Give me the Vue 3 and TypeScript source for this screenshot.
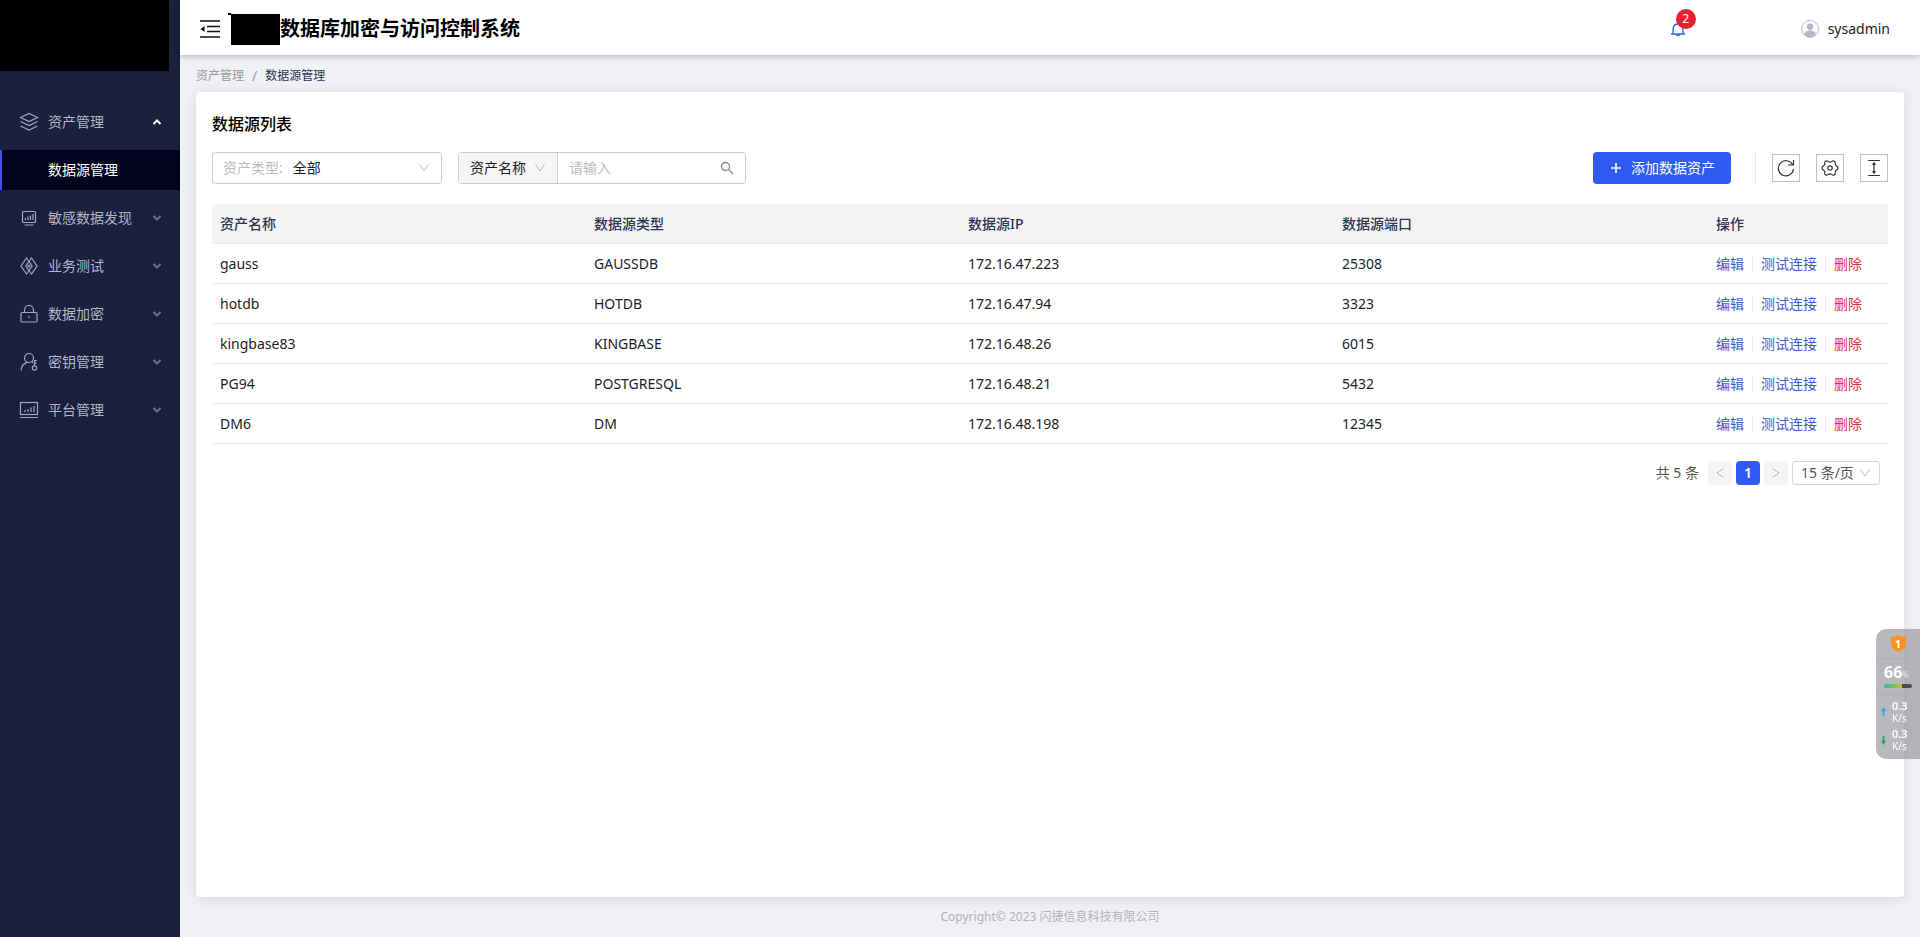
<script setup lang="ts">
import { ref } from 'vue'

interface MenuItem {
  title: string
  icon: string
  open?: boolean
  children?: string[]
}

interface Source {
  name: string
  type: string
  ip: string
  port: string
}

const menu: MenuItem[] = [
  { title: '资产管理', icon: 'layers', open: true, children: ['数据源管理'] },
  { title: '敏感数据发现', icon: 'monitor' },
  { title: '业务测试', icon: 'diamond' },
  { title: '数据加密', icon: 'lock' },
  { title: '密钥管理', icon: 'key' },
  { title: '平台管理', icon: 'chart' },
]

const columns = ['资产名称', '数据源类型', '数据源IP', '数据源端口', '操作']

const sources: Source[] = [
  { name: 'gauss', type: 'GAUSSDB', ip: '172.16.47.223', port: '25308' },
  { name: 'hotdb', type: 'HOTDB', ip: '172.16.47.94', port: '3323' },
  { name: 'kingbase83', type: 'KINGBASE', ip: '172.16.48.26', port: '6015' },
  { name: 'PG94', type: 'POSTGRESQL', ip: '172.16.48.21', port: '5432' },
  { name: 'DM6', type: 'DM', ip: '172.16.48.198', port: '12345' },
]

const keyword = ref('')
</script>

<template>
  <div class="layout">
    <aside class="sidebar">
      <div class="logo"></div>
      <nav class="menu">
        <template v-for="item in menu" :key="item.title">
          <button type="button" class="menu-item">
            <svg class="menu-icon" viewBox="0 0 20 20" aria-hidden="true">
              <template v-if="item.icon === 'layers'">
                <path d="M10 1.500 18.500 5.500 10 9.500 1.500 5.500z" />
                <path d="M1.500 9.500 10 13.500 18.500 9.500M1.500 14 10 18 18.500 14" />
              </template>
              <template v-else-if="item.icon === 'monitor'">
                <rect x="3.500" y="3.500" width="13" height="11" rx="1" />
                <path d="M5.500 17h9M6.500 10v2M9 8.500v3.500M11.500 7.500v4.500M14 6v6" />
              </template>
              <template v-else-if="item.icon === 'diamond'">
                <path d="M10 5.500 7.500 2 2 10l5.500 8 2.500-3.500M10 5.500 12.500 2 18 10l-5.500 8-2.500-3.500" />
                <path d="M10 5.500 6.800 10l3.200 4.500 3.200-4.500z" />
                <circle cx="10" cy="10" r="1" />
              </template>
              <template v-else-if="item.icon === 'lock'">
                <rect x="2" y="8.500" width="16" height="9.500" rx="1" />
                <path d="M5.500 8.500V6a4.500 4.500 0 0 1 9 0v2.500M10 12v2" />
              </template>
              <template v-else-if="item.icon === 'key'">
                <circle cx="10" cy="6" r="4.500" />
                <path d="M2 18.500c.5-5 3-7.500 6.500-8.200M12.500 9.500l1.500 1.300" />
                <circle cx="15.500" cy="16" r="2.200" />
                <path d="M15.500 13.800V8.500h2.500M15.500 11.200h2" />
              </template>
              <template v-else>
                <rect x="1.500" y="2.500" width="17" height="12" />
                <path d="M1 17.500h18M6 10v2M9 9v3M12 7.500v4.500M15 6v6" />
              </template>
            </svg>
            <span>{{ item.title }}</span>
            <svg class="arrow" :class="{ open: item.open }" viewBox="0 0 10 10" aria-hidden="true">
              <path d="M1.500 3 5 6.500 8.500 3" />
            </svg>
          </button>
          <a v-for="child in item.children" :key="child" href="#" class="submenu-item">{{ child }}</a>
        </template>
      </nav>
    </aside>

    <div class="main">
      <header class="header">
        <button type="button" class="fold" aria-label="收起菜单">
          <svg viewBox="0 0 20 20" aria-hidden="true">
            <path d="M0 2h20M7 7.500h13M7 12.500h13M0 18h20" fill="none" stroke="#111" stroke-width="1.500" />
            <path d="M4.500 7v6L.5 10z" fill="#111" />
          </svg>
        </button>
        <div class="brand"></div>
        <h1>数据库加密与访问控制系统</h1>
        <button type="button" class="bell" aria-label="通知">
          <svg viewBox="0 0 16 16" aria-hidden="true">
            <path d="M1 13h14M2.500 13c.7-1 .7-2 .7-5 0-3 2-5 4.800-5s4.800 2 4.800 5c0 3 0 4 .7 5M6.200 13.500c.2 1.500 3.400 1.500 3.600 0" />
          </svg>
          <span class="badge">2</span>
        </button>
        <button type="button" class="user">
          <svg viewBox="0 0 18 18" aria-hidden="true">
            <circle cx="9" cy="9" r="8.500" fill="#fff" stroke="#b9bccd" />
            <circle cx="9" cy="6.800" r="3.200" fill="#b5b8ca" />
            <path d="M3 14.500c1-3 3-4 6-4s5 1 6 4a8 8 0 0 1-12 0z" fill="#b5b8ca" />
          </svg>
          <span>sysadmin</span>
        </button>
      </header>

      <nav class="breadcrumb" aria-label="面包屑">
        <a href="#">资产管理</a>
        <span class="slash">/</span>
        <span class="current">数据源管理</span>
      </nav>

      <main class="card">
        <h2>数据源列表</h2>
        <div class="toolbar">
          <div class="box type-box">
            <label for="asset-type">资产类型:</label>
            <select id="asset-type"><option>全部</option></select>
            <svg class="chevron" viewBox="0 0 12 12" aria-hidden="true"><path d="M1.500 2.500 6 9l4.500-6.500" /></svg>
          </div>
          <div class="box search-box">
            <div class="addon">
              <select aria-label="搜索字段"><option>资产名称</option></select>
              <svg class="chevron" viewBox="0 0 12 12" aria-hidden="true"><path d="M1.500 2.500 6 9l4.500-6.500" /></svg>
            </div>
            <input v-model="keyword" type="text" placeholder="请输入" aria-label="搜索关键字" />
            <button type="button" class="search" aria-label="搜索">
              <svg viewBox="0 0 14 14" aria-hidden="true"><circle cx="5.500" cy="5.500" r="4" /><path d="m8.500 8.500 4.500 4.500" /></svg>
            </button>
          </div>
          <button type="button" class="add">
            <svg viewBox="0 0 12 12" aria-hidden="true"><path d="M6 1v10M1 6h10" /></svg>
            <span>添加数据资产</span>
          </button>
          <span class="separator"></span>
          <div class="tools">
            <button type="button" aria-label="刷新">
              <svg viewBox="0 0 18 18" aria-hidden="true"><path d="M15.500 5.500A7.600 7.600 0 1 0 16.500 10M16.500 1v5h-5.500" /></svg>
            </button>
            <button type="button" aria-label="设置">
              <svg viewBox="0 0 18 18" aria-hidden="true">
                <path d="M5.800 1.800C7 1.800 7.200 3.200 9 3.200s2-1.400 3.200-1.400 2.200 1 2 2.400c-.2 1.500.2 2 1.300 2.700C16.800 7.600 17 8.200 17 9s-.2 1.400-1.500 2.100c-1.100.7-1.500 1.200-1.300 2.700.2 1.400-.8 2.400-2 2.400s-1.400-1.400-3.200-1.400-2 1.400-3.200 1.400-2.200-1-2-2.400c.2-1.500-.2-2-1.300-2.700C1.200 10.400 1 9.800 1 9s.2-1.400 1.500-2.100c1.100-.7 1.500-1.200 1.300-2.700-.2-1.400.8-2.400 2-2.400z" />
                <circle cx="9" cy="9" r="2.200" />
              </svg>
            </button>
            <button type="button" aria-label="密度">
              <svg viewBox="0 0 18 18" aria-hidden="true">
                <path d="M3 1.500h12M3 16.500h12M9 4v10" />
                <path d="M9 2.800 11 6H7zM9 15.200 11 12H7z" fill="#333" stroke="none" />
              </svg>
            </button>
          </div>
        </div>

        <table>
          <thead>
            <tr><th v-for="column in columns" :key="column" scope="col">{{ column }}</th></tr>
          </thead>
          <tbody>
            <tr v-for="source in sources" :key="source.name">
              <td>{{ source.name }}</td>
              <td>{{ source.type }}</td>
              <td>{{ source.ip }}</td>
              <td>{{ source.port }}</td>
              <td>
                <div class="actions">
                  <a href="#">编辑</a>
                  <a href="#">测试连接</a>
                  <a href="#" class="danger">删除</a>
                </div>
              </td>
            </tr>
          </tbody>
        </table>

        <div class="pagination">
          <span class="total">共 5 条</span>
          <button type="button" disabled aria-label="上一页">
            <svg viewBox="0 0 12 12" aria-hidden="true"><path d="M9.500 1.500 3 6l6.500 4.500" /></svg>
          </button>
          <button type="button" class="active">1</button>
          <button type="button" disabled aria-label="下一页">
            <svg viewBox="0 0 12 12" aria-hidden="true"><path d="M2.500 1.500 9 6l-6.500 4.500" /></svg>
          </button>
          <div class="page-size">
            <select aria-label="每页条数"><option>15 条/页</option></select>
            <svg class="chevron" viewBox="0 0 12 12" aria-hidden="true"><path d="M1.500 2.500 6 9l4.500-6.500" /></svg>
          </div>
        </div>
      </main>

      <footer>Copyright© 2023 闪捷信息科技有限公司</footer>
    </div>

    <div class="monitor">
      <div class="shield">
        <svg viewBox="0 0 16 18" aria-hidden="true"><path d="M8 0c2 2 5 2 8 2v7c0 5-4 7-8 9-4-2-8-4-8-9V2c3 0 6 0 8-2z" fill="#f7931e" /></svg>
        <span>1</span>
      </div>
      <div class="load">
        <div><b>66</b><small>%</small></div>
        <div class="bar"></div>
      </div>
      <div class="rate">
        <svg viewBox="0 0 6 12" aria-hidden="true"><path d="M3 0 6 5H4v6H2V5H0z" fill="#27a9d8" /></svg>
        <p><b>0.3</b><span>K/s</span></p>
      </div>
      <div class="rate">
        <svg viewBox="0 0 6 12" aria-hidden="true"><path d="M3 12 6 7H4V1H2v6H0z" fill="#17a673" /></svg>
        <p><b>0.3</b><span>K/s</span></p>
      </div>
    </div>
  </div>
</template>

<style>
body {
  margin: 0;
}
</style>

<style scoped>
.layout {
  display: flex;
  min-height: 100vh;
  background: #f0f1f5;
  color: #1d1d1f;
  font-family: "Noto Sans", "Noto Sans CJK SC", sans-serif;
  font-size: 14px;
  line-height: 20px;
}
.layout * {
  box-sizing: border-box;
}
button,
input,
select {
  margin: 0;
  padding: 0;
  border: 0;
  background: none;
  color: inherit;
  font: inherit;
  outline: none;
  appearance: none;
}
a {
  color: inherit;
  text-decoration: none;
}
svg {
  display: block;
  flex: none;
  fill: none;
}

.sidebar {
  flex: none;
  width: 180px;
  background: #1a203d;
}
.logo {
  width: 169px;
  height: 71px;
  background: #000;
}
.menu {
  display: flex;
  flex-direction: column;
  gap: 8px;
  padding-top: 31px;
}
.menu-item {
  display: flex;
  align-items: center;
  height: 40px;
  padding: 0 18px 0 19px;
  color: #b3b7c6;
  text-align: left;
}
.menu-item span {
  flex: 1;
  margin-left: 9px;
}
.menu-icon {
  width: 20px;
  height: 20px;
  stroke: #a3a8bb;
  stroke-width: 1.2;
}
.arrow {
  width: 10px;
  height: 10px;
  stroke: #6c728a;
  stroke-width: 2;
}
.arrow.open {
  stroke: #fff;
  transform: rotate(180deg);
}
.submenu-item {
  height: 40px;
  padding-left: 46px;
  border-left: 2px solid #3a55e8;
  background: #00031a;
  color: #fff;
  line-height: 40px;
}

.main {
  display: flex;
  flex: 1;
  flex-direction: column;
  min-width: 0;
}
.header {
  display: flex;
  align-items: center;
  height: 55px;
  padding: 3px 30px 0 20px;
  background: #fff;
  box-shadow: 0 1px 6px rgba(0, 0, 0, 0.28);
}
.fold svg {
  width: 20px;
  height: 20px;
}
.brand {
  position: relative;
  width: 49px;
  height: 31px;
  margin-left: 11px;
  background: #000;
}
.brand::before {
  position: absolute;
  top: -1px;
  left: -3px;
  width: 3px;
  height: 2px;
  background: #000;
  content: "";
}
h1 {
  margin: 0;
  color: #000;
  font-size: 20px;
  font-weight: 700;
  line-height: 28px;
}
.bell {
  position: relative;
  margin-left: auto;
}
.bell svg {
  width: 16px;
  height: 16px;
  stroke: #3a62d8;
  stroke-width: 1.4;
}
.badge {
  position: absolute;
  top: -12px;
  left: 6px;
  width: 20px;
  height: 20px;
  border-radius: 10px;
  background: #e8202f;
  color: #fff;
  font-size: 12px;
  text-align: center;
}
.user {
  display: flex;
  align-items: center;
  gap: 9px;
  margin-left: 115px;
}
.user svg {
  width: 18px;
  height: 18px;
}

.breadcrumb {
  display: flex;
  gap: 8px;
  height: 37px;
  padding: 11px 16px 0;
  color: #999;
  font-size: 12px;
}
.slash {
  font-size: 14px;
}
.current {
  color: #2c3550;
}

.card {
  flex: 1;
  margin: 0 16px;
  padding: 20px 16px;
  border-radius: 4px;
  background: #fff;
  box-shadow: 0 2px 12px rgba(0, 0, 0, 0.1);
}
h2 {
  margin: 0;
  color: #000;
  font-size: 16px;
  font-weight: 500;
  line-height: 24px;
}
.toolbar {
  display: flex;
  align-items: center;
  margin: 16px 0 20px;
}
.box {
  display: flex;
  align-items: center;
  height: 32px;
  border: 1px solid #ccc;
  border-radius: 4px;
}
.chevron {
  width: 12px;
  height: 12px;
  stroke: #bbb;
  pointer-events: none;
}
.type-box {
  width: 230px;
  padding: 0 11px 0 10px;
}
.type-box label {
  color: #bbb;
}
.type-box select {
  flex: 1;
  margin-left: 10px;
}
.search-box {
  width: 288px;
  margin-left: 16px;
}
.addon {
  display: flex;
  align-items: center;
  gap: 8px;
  height: 30px;
  padding: 0 11px;
  border-right: 1px solid #ccc;
  border-radius: 3px 0 0 3px;
  background: #f5f5f5;
}
.search-box input {
  flex: 1;
  min-width: 0;
  padding: 0 11px;
}
.search-box input::placeholder {
  color: #bbb;
  opacity: 1;
}
.search {
  padding: 0 11px;
}
.search svg {
  width: 14px;
  height: 14px;
  stroke: #888;
  stroke-width: 1.3;
}
.add {
  display: flex;
  align-items: center;
  gap: 9px;
  height: 32px;
  margin-left: auto;
  padding: 0 16px 0 17px;
  border-radius: 4px;
  background: #2f5bf2;
  color: #fff;
}
.add svg {
  width: 12px;
  height: 12px;
  stroke: #fff;
  stroke-width: 1.6;
}
.separator {
  width: 1px;
  height: 32px;
  margin: 0 16px 0 24px;
  background: #e6e6e6;
}
.tools {
  display: flex;
  gap: 16px;
}
.tools button {
  display: flex;
  align-items: center;
  justify-content: center;
  width: 28px;
  height: 28px;
  border: 1px solid #bfbfbf;
}
.tools svg {
  width: 18px;
  height: 18px;
  stroke: #333;
  stroke-width: 1.2;
}

table {
  width: 100%;
  border-collapse: separate;
  border-spacing: 0;
  table-layout: fixed;
}
th,
td {
  height: 40px;
  padding: 0 8px;
  border-bottom: 1px solid #e9eaed;
  text-align: left;
}
th {
  background: #f4f4f5;
  color: #2c3550;
  font-weight: 500;
}
th:last-child {
  width: 180px;
}
.actions {
  display: flex;
  align-items: center;
  color: #3a5fce;
}
.actions a + a {
  margin-left: 8px;
  padding-left: 9px;
  background: linear-gradient(#e6e6e6, #e6e6e6) left center / 1px 14px no-repeat;
}
.actions .danger {
  color: #dc3545;
}

.pagination {
  display: flex;
  align-items: center;
  justify-content: flex-end;
  gap: 4px;
  padding: 17px 8px 0 0;
  color: #555;
}
.total {
  margin-right: 5px;
}
.pagination button {
  display: flex;
  align-items: center;
  justify-content: center;
  width: 24px;
  height: 24px;
  border-radius: 4px;
  background: #f5f5f5;
}
.pagination button svg {
  width: 12px;
  height: 12px;
  stroke: #bbb;
}
.pagination .active {
  background: #2f5bf2;
  color: #fff;
  font-weight: 600;
}
.page-size {
  display: flex;
  align-items: center;
  justify-content: space-between;
  width: 88px;
  height: 24px;
  padding: 0 8px;
  border: 1px solid #d4d4d4;
  border-radius: 3px;
}

footer {
  height: 40px;
  padding-top: 10px;
  color: #b0b2b8;
  font-size: 12px;
  text-align: center;
}

.monitor {
  position: fixed;
  top: 629px;
  right: 0;
  width: 44px;
  height: 130px;
  border-radius: 10px 0 0 10px;
  background: rgba(150, 152, 156, 0.68);
  color: #fff;
}
.shield {
  position: relative;
  display: flex;
  align-items: center;
  justify-content: center;
  height: 30px;
  border-bottom: 1px solid #b0b2b6;
}
.shield svg {
  width: 15px;
  height: 17px;
}
.shield span {
  position: absolute;
  inset: 0;
  font-size: 11px;
  font-weight: 700;
  line-height: 30px;
  text-align: center;
}
.load {
  height: 36px;
  padding: 4px 8px 0;
  border-bottom: 1px solid #b0b2b6;
  line-height: 18px;
  white-space: nowrap;
}
.load b {
  font-size: 16px;
}
.load small {
  font-size: 8px;
  opacity: 0.7;
}
.bar {
  width: 28px;
  height: 4px;
  border-radius: 2px;
  background: linear-gradient(90deg, #2fb8a8, #b8c82a 64%, #4a4a58 64%);
}
.rate {
  display: flex;
  align-items: center;
  gap: 6px;
  height: 28px;
  padding: 5px 0 0 5px;
}
.rate svg {
  width: 5px;
  height: 10px;
}
.rate p {
  display: flex;
  flex-direction: column;
  margin: 0;
  font-size: 10px;
  line-height: 12px;
}
.rate b {
  font-size: 11px;
  font-weight: 600;
}
</style>
